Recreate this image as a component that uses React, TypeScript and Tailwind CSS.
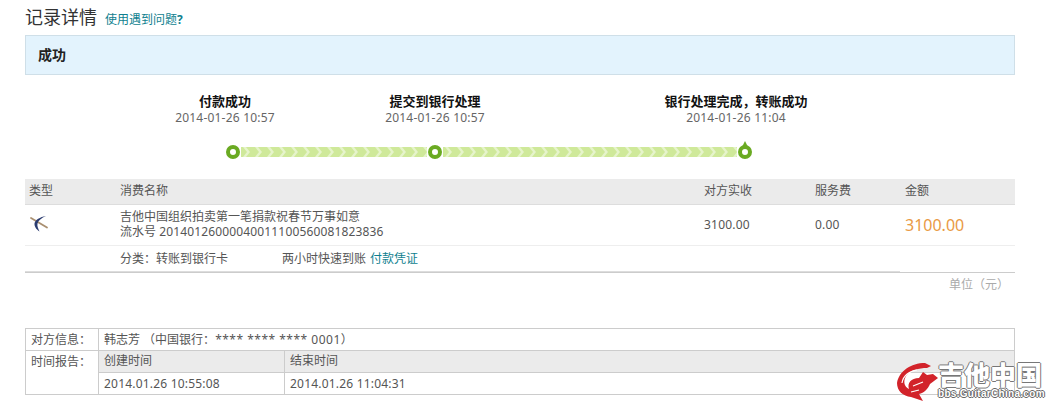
import React from "react";

const FONT = "[font-family:'Noto_Sans','Noto_Sans_CJK_SC',sans-serif]";

const steps = [
  { title: "付款成功", time: "2014-01-26 10:57", offset: "ml-[120px]" },
  { title: "提交到银行处理", time: "2014-01-26 10:57", offset: "" },
  { title: "银行处理完成，转账成功", time: "2014-01-26 11:04", offset: "ml-[91px]" },
];

function Dot({ last }: { last?: boolean }) {
  return (
    <svg width="16" height="20" viewBox="0 0 16 20" className="shrink-0">
      {last && <path d="M8 1 L11 7 L5 7 Z" fill="#6aaa22" />}
      <circle cx="8" cy="12" r="5" fill="#fff" stroke="#6aaa22" strokeWidth="4" />
    </svg>
  );
}

function Track({ id, width }: { id: string; width: number }) {
  return (
    <svg width={width} height="10" className="shrink-0">
      <defs>
        <pattern id={id} width="12" height="10" patternUnits="userSpaceOnUse">
          <rect width="12" height="10" fill="#cfe99a" />
          <path d="M2 0 L5 0 L9 5 L5 10 L2 10 L6 5 Z" fill="#e6f4cb" />
        </pattern>
      </defs>
      <rect width={width} height="10" fill={`url(#${id})`} />
    </svg>
  );
}

function Watermark() {
  return (
    <div className="absolute left-[897px] top-[362px] flex items-start">
      <svg width="41" height="38" viewBox="0 0 41 38" className="mt-px shrink-0">
        <path
          d="M28 0 C14 0 2 8 0 20 C0 28 6 33 14 34 L26 38 L22 31 C27 30 31 26 33 21 L41 15 L36 11 L30 12 L26 9 L22 15 C14 15 10 20 12 26 C7 24 6 18 9 13 C13 7 22 5 30 5 L34 3 Z"
          fill="#d2232a"
        />
        <path d="M5 20 C6 13 12 8 20 7 M14 29 L22 27 M16 23 L26 19" stroke="#fff" strokeWidth="1.2" fill="none" />
      </svg>
      <div className="flex flex-col items-start">
        <div className="text-[26px] leading-[26px] font-black text-white [text-shadow:1px_0_#777,-1px_0_#777,0_1px_#777,0_-1px_#777]">
          吉他中国
        </div>
        <div className="text-[10px] leading-[12px] font-bold tracking-[0.3px] text-white [text-shadow:1px_0_#666,-1px_0_#666,0_1px_#666,0_-1px_#666] [font-family:'Liberation_Sans',sans-serif]">
          bbs.GuitarChina.com
        </div>
      </div>
    </div>
  );
}

export default function App() {
  return (
    <div className={`relative w-[1049px] h-[411px] overflow-hidden bg-white pl-[25px] pt-[5px] text-[12px] text-[#555] ${FONT}`}>
      <div className="w-[990px]">
        <div className="flex items-baseline h-[25px]">
          <h1 className="text-[18px] leading-[25px] font-normal text-[#333]">记录详情</h1>
          <a className="ml-2 text-[#0f7f8f]">
            使用遇到问题<b>?</b>
          </a>
        </div>

        <div className="mt-[5px] h-[40px] border border-[#cfdfe8] bg-[#e3f3fd] pl-3 pb-px flex items-center text-[14px] font-bold text-[#222]">
          成功
        </div>

        <div className="mt-[18px] -ml-[25px] flex">
          {steps.map((s) => (
            <div key={s.title} className={`w-[210px] text-center leading-4 ${s.offset}`}>
              <div className="mb-px text-[13px] font-bold text-[#111]">{s.title}</div>
              <div className="text-[#666] tracking-[0.2px]">{s.time}</div>
            </div>
          ))}
        </div>

        <div className="mt-[14px] ml-[200px] flex items-end h-[20px]">
          <Dot />
          <div className="mb-[3px]"><Track id="t1" width={186} /></div>
          <Dot />
          <div className="mb-[3px]"><Track id="t2" width={294} /></div>
          <Dot last />
        </div>

        <div className="mt-[19px] flex h-[26px] items-center bg-[#ebebeb] border-b border-[#ddd] pb-[2px]">
          <div className="w-[95px] pl-[4px]">类型</div>
          <div className="w-[584px]">消费名称</div>
          <div className="w-[111px]">对方实收</div>
          <div className="w-[90px]">服务费</div>
          <div>金额</div>
        </div>

        <div className="flex h-[41px] items-center border-b border-[#eee]">
          <div className="w-[95px] pl-[4px] pb-[3px]">
            <svg width="20" height="18" viewBox="0 0 20 18" className="block">
              <path d="M2 3 L18 12.5" stroke="#a98f70" strokeWidth="1.8" strokeLinecap="round" fill="none" />
              <path d="M17 1 C11 2 6 5 5.5 8.5 C5.2 11.5 7.5 14.5 10.5 16.5 C9 13.5 8 11 8.5 8.5 C9.2 5.5 12.5 3 17 1 Z" fill="#2b3c70" />
            </svg>
          </div>
          <div className="w-[584px] leading-[15px] pb-[2px]">
            <div>吉他中国组织拍卖第一笔捐款祝春节万事如意</div>
            <div>
              流水号 <span className="tracking-[0.15px]">20140126000040011100560081823836</span>
            </div>
          </div>
          <div className="w-[111px] tracking-[0.2px]">3100.00</div>
          <div className="w-[90px] tracking-[0.2px]">0.00</div>
          <div className="text-[16px] text-[#e99a45]">3100.00</div>
        </div>

        <div className="flex h-[27px] w-[875px] items-center border-b-2 border-[#ddd] pl-[95px] pt-px">
          <div className="w-[162px]">分类：转账到银行卡</div>
          <div>两小时快速到账</div>
          <a className="ml-1 text-[#0f7f8f]">付款凭证</a>
        </div>

        <div className="-mt-px border-t border-[#ccc] h-[22px] pr-[6px] text-right leading-[24px] text-[#aaa]">
          单位（元）
        </div>

        <div className="mt-[34px] border border-[#ccc] grid grid-cols-[73px_1fr]">
          <div className="h-[22px] pl-[5px] leading-[21px] border-r border-[#ccc] border-b">对方信息：</div>
          <div className="h-[22px] pl-[5px] leading-[21px] border-b border-[#ccc]">
            韩志芳 （中国银行：<span className="tracking-[0.5px]">**** **** **** 0001</span>）
          </div>
          <div className="pl-[5px] leading-[21px] border-r border-[#ccc]">时间报告：</div>
          <div>
            <div className="flex h-[22px] items-start bg-[#ebebeb] border-b border-[#ccc]">
              <div className="w-[186px] h-full pl-[5px] leading-[19px] border-r border-[#ccc]">创建时间</div>
              <div className="pl-[5px] leading-[19px]">结束时间</div>
            </div>
            <div className="flex h-[21px] items-center">
              <div className="w-[186px] h-full pl-[5px] leading-[22px] border-r border-[#ccc] tracking-[0.2px]">2014.01.26 10:55:08</div>
              <div className="pl-[5px] tracking-[0.2px]">2014.01.26 11:04:31</div>
            </div>
          </div>
        </div>
      </div>
      <Watermark />
    </div>
  );
}
